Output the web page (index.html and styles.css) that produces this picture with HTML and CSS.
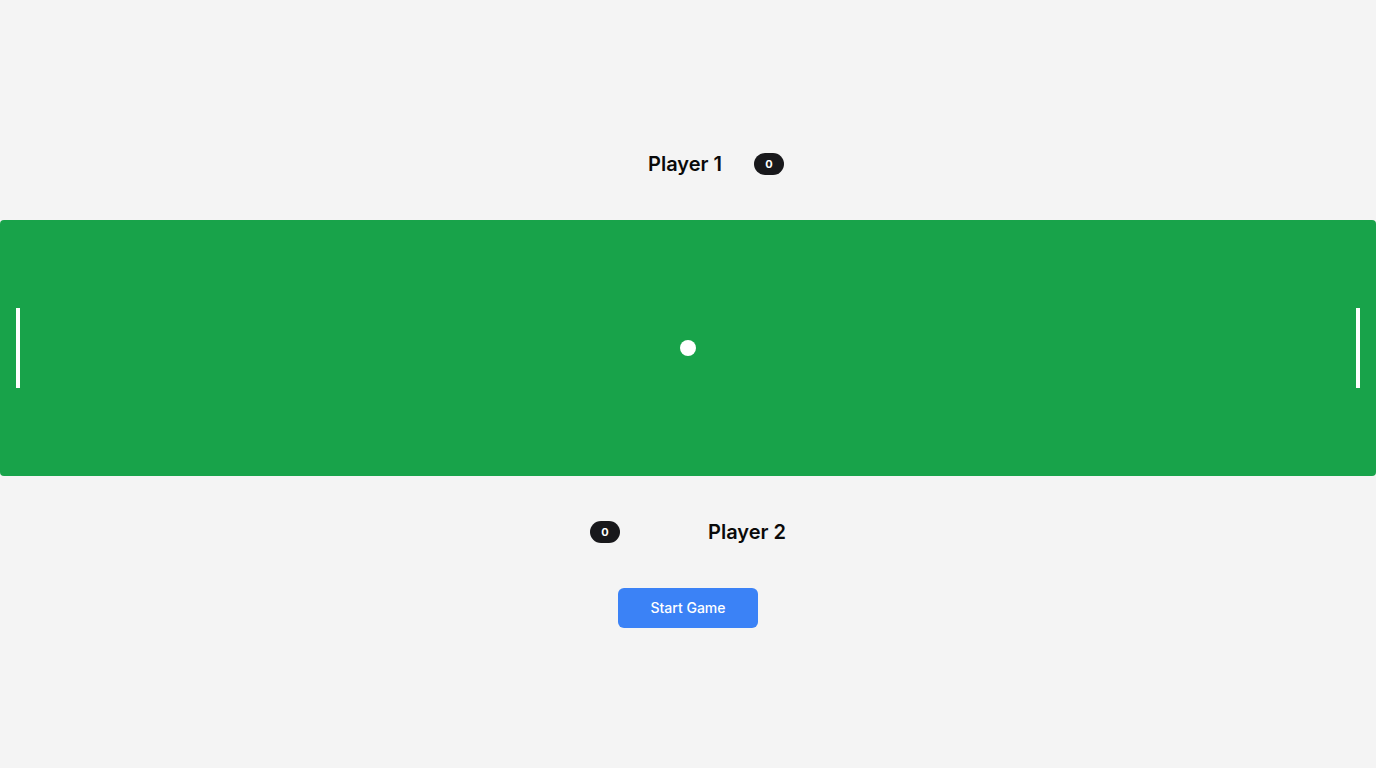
FILE: index.html
```html
<!DOCTYPE html>
<html lang="en">
<head>
<meta charset="utf-8">
<title>Pong</title>
<link rel="stylesheet" href="styles.css">
</head>
<body>
<main class="game">
  <div class="score-row score-row--top">
    <span class="player-name">Player 1</span>
    <span class="badge">0</span>
  </div>
  <div class="field">
    <div class="paddle"></div>
    <div class="ball"></div>
    <div class="paddle"></div>
  </div>
  <div class="score-row score-row--bottom">
    <span class="badge">0</span>
    <span class="player-name">Player 2</span>
  </div>
  <div class="actions">
    <button class="start-btn" type="button">Start Game</button>
  </div>
</main>
</body>
</html>
```

FILE: styles.css
```css
* { box-sizing: border-box; }
html, body {
  margin: 0;
  padding: 0;
  background: #f4f4f4;
  font-family: Inter, "Noto Sans", sans-serif;
  color: #0a0a0a;
}
.game {
  display: flex;
  flex-direction: column;
  padding-top: 150px;
}
.score-row {
  display: flex;
  justify-content: center;
  align-items: center;
  height: 28px;
}
.score-row--top {
  gap: 32px;
  padding-left: 56px;
}
.score-row--bottom {
  gap: 88px;
  margin-top: 42px;
}
.player-name {
  font-size: 20px;
  line-height: 28px;
  font-weight: 600;
}
.badge {
  display: inline-flex;
  align-items: center;
  justify-content: center;
  width: 30px;
  height: 22px;
  border-radius: 11px;
  background: #18181b;
  color: #fff;
  font-size: 11px;
  font-weight: 700;
}
.field {
  margin-top: 42px;
  height: 256px;
  background: #18a34a;
  border-radius: 4px;
  display: flex;
  align-items: center;
  justify-content: space-between;
  padding: 0 16px;
}
.paddle {
  width: 4px;
  height: 80px;
  background: #fff;
}
.ball {
  width: 16px;
  height: 16px;
  border-radius: 50%;
  background: #fff;
}
.actions {
  display: flex;
  justify-content: center;
  margin-top: 42px;
}
.start-btn {
  width: 140px;
  height: 40px;
  padding: 0 0 2px;
  border: 0;
  border-radius: 6px;
  background: #3b82f6;
  color: #fff;
  font-family: Inter, "Noto Sans", sans-serif;
  font-size: 14px;
  font-weight: 500;
}
```
